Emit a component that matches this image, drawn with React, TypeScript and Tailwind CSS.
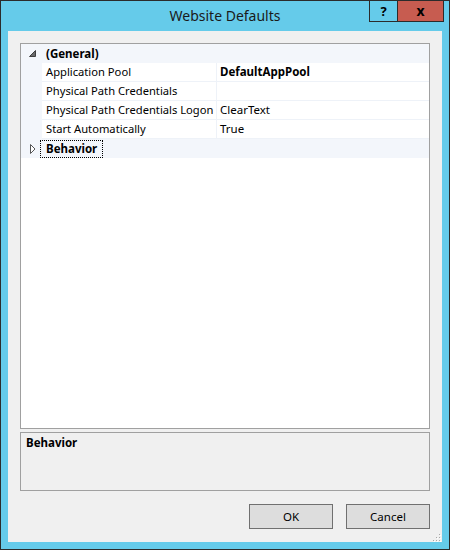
const font = "font-['Noto_Sans','Liberation_Sans',sans-serif]";

type Prop = { name: string; value: string; bold?: boolean };

const general: Prop[] = [
  { name: "Application Pool", value: "DefaultAppPool", bold: true },
  { name: "Physical Path Credentials", value: "" },
  { name: "Physical Path Credentials Logon", value: "ClearText" },
  { name: "Start Automatically", value: "True" },
];

function ExpandedGlyph() {
  return (
    <svg width="7" height="7" viewBox="0 0 7 7" className="ml-[8px]">
      <polygon points="6.5,0.5 6.5,6.5 0.5,6.5" fill="#6b6b6b" stroke="#3f3f3f" strokeWidth="1" />
    </svg>
  );
}

function CollapsedGlyph() {
  return (
    <svg width="6" height="10" viewBox="0 0 6 10" className="ml-[9px]">
      <polygon points="0.5,0.5 5,5 0.5,9.5" fill="#ffffff" stroke="#555555" strokeWidth="1" />
    </svg>
  );
}

function PropRow({ p }: { p: Prop }) {
  return (
    <div className="flex h-[19px]">
      <div className="w-[21px] bg-[#f3f6fb]" />
      <div className="flex flex-1 border-b border-[#eef2f8]">
        <div className="w-[175px] overflow-hidden border-r border-[#eef2f8] pl-[4px] text-[11.2px] leading-[18px] whitespace-nowrap">
          {p.name}
        </div>
        <div className={`flex-1 pl-[3px] leading-[18px] ${p.bold ? "font-bold" : ""}`}>{p.value}</div>
      </div>
    </div>
  );
}

function ResizeGrip() {
  const dots = [
    [6, 0],
    [3, 3],
    [6, 3],
    [0, 6],
    [3, 6],
    [6, 6],
  ];
  return (
    <svg width="8" height="8" viewBox="0 0 8 8" className="absolute right-[1px] bottom-[0px]">
      {dots.map(([x, y], i) => (
        <g key={i}>
          <rect x={x + 1} y={y + 1} width="1" height="1" fill="#ffffff" />
          <rect x={x} y={y} width="1" height="1" fill="#a8a8a8" />
        </g>
      ))}
    </svg>
  );
}

export default function App() {
  return (
    <div
      className={`${font} relative flex h-[550px] w-[450px] flex-col border border-[#2b2b2b] bg-[#65cbea] text-[11.5px] text-black`}
    >
      <div className="flex h-[30px] items-center justify-center pb-[1px] text-[14px] text-[#1a1a1a]">Website Defaults</div>

      <div className="absolute top-[-1px] left-[368px] flex h-[22px]">
        <div className="flex w-[29px] items-center justify-center border border-[#2b2b2b] bg-[#65cbea] text-[13px] font-bold leading-none">
          ?
        </div>
        <div className="-ml-px flex w-[47px] items-center justify-center border border-[#2b2b2b] bg-[#c75c50] text-[14px] font-bold leading-none">
          x
        </div>
      </div>

      <div className="relative mx-[7px] mb-[7px] flex flex-1 flex-col bg-[#f0f0f0] px-[12px] pt-[12px]">
        <div className="flex h-[386px] flex-col border border-[#a0a0a0] bg-white">
          <div className="flex h-[19px] items-center bg-[#f3f6fb]">
            <div className="flex w-[21px] items-center">
              <ExpandedGlyph />
            </div>
            <span className="pl-[4px] font-bold">(General)</span>
          </div>
          {general.map((p) => (
            <PropRow key={p.name} p={p} />
          ))}
          <div className="flex h-[19px] items-center bg-[#f3f6fb]">
            <div className="flex w-[19px] items-center">
              <CollapsedGlyph />
            </div>
            <span className="h-[18px] border border-dotted border-black px-[5px] leading-[16px] font-bold">Behavior</span>
          </div>
        </div>

        <div className="mt-[3px] h-[59px] border border-[#a0a0a0] px-[5px] pt-[2px] leading-[16px] font-bold">Behavior</div>

        <div className="mt-[13px] flex justify-end gap-[13px]">
          <button className="h-[25px] w-[84px] border border-[#707070] bg-[#dddddd]">OK</button>
          <button className="h-[25px] w-[84px] border border-[#707070] bg-[#dddddd]">Cancel</button>
        </div>

        <ResizeGrip />
      </div>
    </div>
  );
}
